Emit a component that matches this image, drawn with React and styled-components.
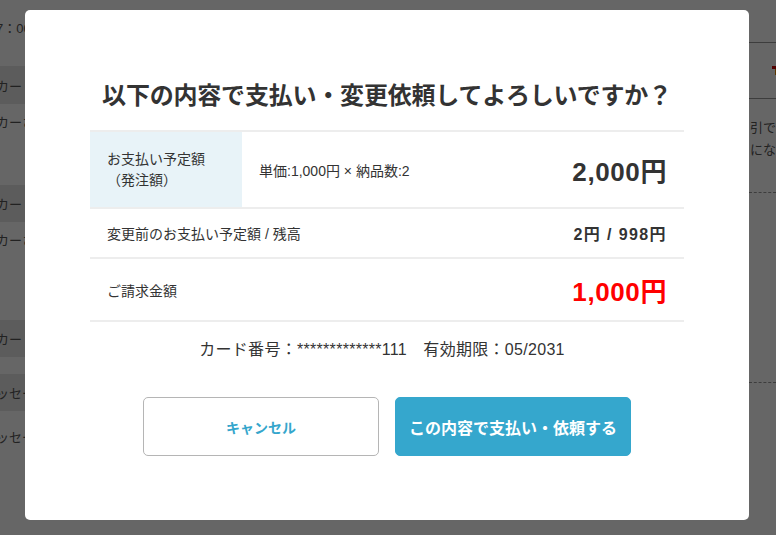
import React from 'react';
import styled, { createGlobalStyle } from 'styled-components';

const GlobalStyle = createGlobalStyle`
  html, body {
    margin: 0;
    padding: 0;
    background: #fff;
  }
  body {
    font-family: "Liberation Sans", "Noto Sans CJK JP", sans-serif;
    color: #333;
  }
  * {
    box-sizing: border-box;
  }
`;

// background page (mostly hidden by the dialog)
const Page = styled.div`
  display: flex;
  width: 776px;
  height: 535px;
  overflow: hidden;
`;

const SideColumn = styled.div`
  width: 80px;
  flex-shrink: 0;
  display: flex;
  flex-direction: column;
  padding-top: 20px;
  margin-left: -4px;
`;

const SideText = styled.div`
  font-size: 13px;
  line-height: 18px;
  color: #555;
  white-space: nowrap;
  margin-bottom: ${p => p.$mb || 0}px;
`;

const SideItem = styled.div`
  height: ${p => p.$h}px;
  display: flex;
  align-items: ${p => (p.$top ? 'flex-start' : 'center')};
  padding-top: ${p => (p.$top ? 8 : 0)}px;
  background: ${p => (p.$band ? '#e6e6e6' : 'transparent')};
  font-size: 13px;
  color: #555;
  white-space: nowrap;
`;

const Spacer = styled.div`
  flex: 1;
`;

const RightColumn = styled.div`
  width: 27px;
  flex-shrink: 0;
  padding-top: 42px;
`;

const RightHead = styled.div`
  height: 57px;
  border-top: 1px solid #9a9a9a;
  border-bottom: 1px solid #9a9a9a;
  padding: 23px 0 0 23px;
`;

const RedMark = styled.div`
  width: 8px;
  height: 9px;
  border-top: 3px solid #cc0000;
  background: linear-gradient(#e68a00, #e68a00) center / 3px 100% no-repeat;
`;

const RightText = styled.div`
  font-size: 13px;
  line-height: 22px;
  color: #555;
  white-space: nowrap;
  padding-left: 1px;
`;

const RightBlock = styled.div`
  padding-top: 18px;
  height: ${p => p.$h}px;
  border-bottom: 1px dashed #9a9a9a;
`;

// dialog
const Overlay = styled.div`
  position: fixed;
  inset: 0;
  background: rgba(0, 0, 0, 0.6);
  display: flex;
  justify-content: center;
  align-items: flex-start;
  padding-top: 10px;
`;

const Modal = styled.div`
  width: 724px;
  height: 510px;
  background: #fff;
  border-radius: 5px;
  padding: 70px 65px 0;
  margin-left: -2px;
`;

const Title = styled.h2`
  margin: 0;
  font-size: 24px;
  line-height: 32px;
  font-weight: bold;
  text-align: center;
  color: #333;
  letter-spacing: -0.2px;
`;

const Table = styled.div`
  margin-top: 18px;
  border-top: 2px solid #ededed;
`;

const Row = styled.div`
  display: flex;
  align-items: stretch;
  min-height: ${p => p.$h}px;
  border-bottom: 2px solid #ededed;
`;

const HeadCell = styled.div`
  width: 152px;
  flex-shrink: 0;
  background: #e8f3f8;
  padding: 0 17px;
  display: flex;
  flex-direction: column;
  justify-content: center;
  font-size: 14px;
  line-height: 21px;
`;

const Label = styled.div`
  flex: 1;
  display: flex;
  align-items: center;
  padding: 0 17px;
  font-size: 14px;
  color: #333;
`;

const Value = styled.div`
  display: flex;
  align-items: center;
  padding: 0 17px;
  font-size: ${p => p.$size}px;
  font-weight: bold;
  letter-spacing: ${p => p.$ls || 0}px;
  color: ${p => p.$color || '#333'};
`;

const CardLine = styled.p`
  margin: 17px 0 0;
  padding-right: 10px;
  font-size: 16px;
  line-height: 22px;
  text-align: center;
  color: #333;
  letter-spacing: 0.3px;
`;

const Buttons = styled.div`
  display: flex;
  justify-content: center;
  gap: 16px;
  margin-top: 36px;
`;

const Button = styled.button`
  width: 236px;
  height: 59px;
  border-radius: 5px;
  font-family: inherit;
  font-weight: bold;
  cursor: pointer;
  border: 1px solid ${p => (p.$primary ? '#35a7cd' : '#b5b5b5')};
  background: ${p => (p.$primary ? '#35a7cd' : '#fff')};
  color: ${p => (p.$primary ? '#fff' : '#35a6cc')};
  font-size: ${p => (p.$primary ? 16 : 14)}px;
`;

export default function App() {
  return (
    <>
      <GlobalStyle />
      <Page>
        <SideColumn>
          <SideText $mb={28}>7：00</SideText>
          <SideItem $h={38} $band>カー</SideItem>
          <SideItem $h={81} $top>カーさん</SideItem>
          <SideItem $h={37} $band>カー</SideItem>
          <SideItem $h={81} $top>カーさん</SideItem>
          <SideItem $h={17} />
          <SideItem $h={37} $band>カー</SideItem>
          <SideItem $h={17} />
          <SideItem $h={37} $band>ッセージ</SideItem>
          <SideItem $h={50}>ッセージ</SideItem>
        </SideColumn>
        <Spacer />
        <RightColumn>
          <RightHead>
            <RedMark />
          </RightHead>
          <RightBlock $h={94}>
            <RightText>引で支</RightText>
            <RightText>になり</RightText>
          </RightBlock>
          <RightBlock $h={190} />
        </RightColumn>
      </Page>

      <Overlay>
        <Modal>
          <Title>以下の内容で支払い・変更依頼してよろしいですか？</Title>
          <Table>
            <Row $h={77}>
              <HeadCell>
                <span>お支払い予定額</span>
                <span>（発注額）</span>
              </HeadCell>
              <Label>単価:1,000円 × 納品数:2</Label>
              <Value $size={26} $ls={0.6}>2,000円</Value>
            </Row>
            <Row $h={50}>
              <Label>変更前のお支払い予定額 / 残高</Label>
              <Value $size={16} $ls={1.4}>2円 / 998円</Value>
            </Row>
            <Row $h={63}>
              <Label>ご請求金額</Label>
              <Value $size={26} $ls={0.6} $color="#ff0000">1,000円</Value>
            </Row>
          </Table>
          <CardLine>カード番号：*************111　有効期限：05/2031</CardLine>
          <Buttons>
            <Button>キャンセル</Button>
            <Button $primary>この内容で支払い・依頼する</Button>
          </Buttons>
        </Modal>
      </Overlay>
    </>
  );
}
